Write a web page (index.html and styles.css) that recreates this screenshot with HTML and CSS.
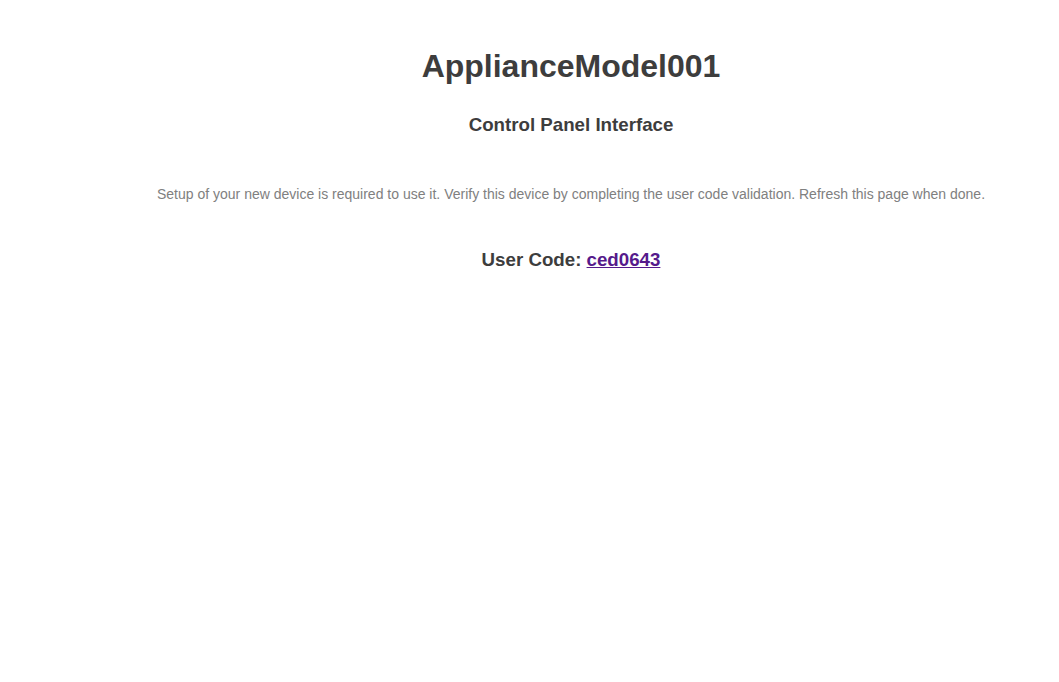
FILE: index.html
```html
<!DOCTYPE html>
<html>
<head>
<meta charset="utf-8">
<link rel="stylesheet" href="styles.css">
</head>
<body>
<div class="page">
  <h1 class="title">ApplianceModel001</h1>
  <h2 class="subtitle">Control Panel Interface</h2>
  <p class="info">Setup of your new device is required to use it. Verify this device by completing the user code validation. Refresh this page when done.</p>
  <h3 class="code">User Code: <a class="code-link" href="#">ced0643</a></h3>
</div>
</body>
</html>
```
FILE: styles.css
```css
body {
  margin: 0;
  background: #fff;
  font-family: "Liberation Sans", Arial, sans-serif;
  color: #3d3d3d;
}
.page {
  padding: 44px 0 0 83px;
  text-align: center;
}
.title {
  font-size: 32px;
  font-weight: bold;
  margin: 0;
  line-height: 44px;
}
.subtitle {
  font-size: 18.72px;
  font-weight: bold;
  margin: 26px 0 0;
  line-height: 22px;
}
.info {
  font-size: 14px;
  color: #808080;
  margin: 49px 0 0;
  line-height: 18px;
}
.code {
  font-size: 18.72px;
  font-weight: bold;
  margin: 46px 0 0;
  line-height: 22px;
}
.code-link {
  color: #551a8b;
}
```
